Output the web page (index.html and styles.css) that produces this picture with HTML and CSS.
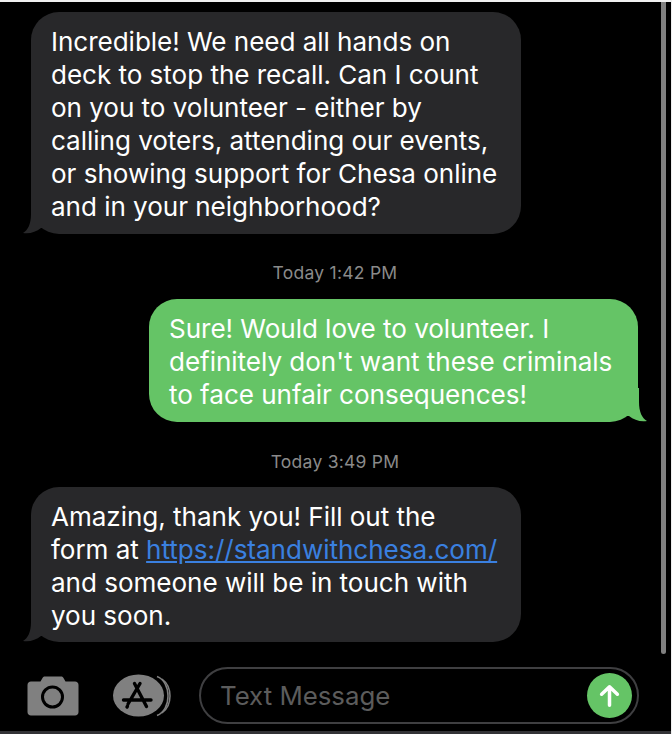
FILE: index.html
```html
<!DOCTYPE html>
<html lang="en">
<head>
<meta charset="utf-8">
<title>Messages</title>
<link rel="stylesheet" href="styles.css">
</head>
<body>
<main class="screen">
  <div class="scrollbar"></div>
  <section class="thread">
    <div class="bubble received first">
      <p>Incredible! We need all hands on<br>deck to stop the recall. Can I count<br>on you to volunteer - either by<br>calling voters, attending our events,<br>or showing support for Chesa online<br>and in your neighborhood?</p>
      <svg class="tail tail-left" viewBox="0 0 24 34"><path d="M8 0V14C8 24 5 30 0 33C7 34 13 32 18 28L24 28V0Z"/></svg>
    </div>
    <div class="stamp">Today 1:42 PM</div>
    <div class="bubble sent">
      <p>Sure! Would love to volunteer. I<br>definitely don't want these criminals<br>to face unfair consequences!</p>
      <svg class="tail tail-right" viewBox="0 0 24 34"><path d="M16 0V14C16 24 19 30 24 33C17 34 11 32 6 28L0 28V0Z"/></svg>
    </div>
    <div class="stamp lower">Today 3:49 PM</div>
    <div class="bubble received last">
      <p>Amazing, thank you! Fill out the<br>form at <a href="#">https://standwithchesa.com/</a><br>and someone will be in touch with<br>you soon.</p>
      <svg class="tail tail-left" viewBox="0 0 24 34"><path d="M8 0V14C8 24 5 30 0 33C7 34 13 32 18 28L24 28V0Z"/></svg>
    </div>
  </section>
  <footer class="composer">
    <svg class="camera" viewBox="0 0 52 40"><path fill-rule="evenodd" d="M4 5.500H13.500L15.500 2C16.200 .8 17 .5 18 .5H34C35 .5 35.800 .8 36.500 2L38.500 5.500H48C50 5.500 51.500 7 51.500 9V36C51.500 38.200 50 39.500 48 39.500H4C2 39.500 .5 38.200 .5 36V9C.5 7 2 5.500 4 5.500ZM25.500 9.500A11.500 11.500 0 1 0 25.500 32.500A11.500 11.500 0 1 0 25.500 9.500ZM25.500 12.500A8.500 8.500 0 1 1 25.500 29.500A8.500 8.500 0 1 1 25.500 12.500Z"/></svg>
    <svg class="store" viewBox="0 0 58 44">
      <path class="store-ring" d="M44 2.500C51 5 55 13 55 22C55 31 51 39 44 41.500"/>
      <path class="store-ring" d="M49 5C54.500 9 57 15 57 22C57 29 54.500 35 49 39"/>
      <ellipse class="store-disc" cx="25.500" cy="21.500" rx="25.500" ry="21"/>
      <path class="store-a" d="M21.500 9.500L33.500 32.500M27 9.500L15 30M10.500 26H38M14 33L14.500 32.200"/>
    </svg>
    <div class="field">
      <span class="placeholder">Text Message</span>
      <span class="send">
        <svg viewBox="0 0 24 26"><path d="M12 24V3M3 11.500L12 3L21 11.500"/></svg>
      </span>
    </div>
  </footer>
</main>
</body>
</html>
```
FILE: styles.css
```css
* { box-sizing: border-box; }
html, body { margin: 0; height: 100%; }
body { background: #f0f0f0; overflow: hidden; }
.screen {
  position: relative;
  width: 671px;
  height: 732px;
  margin-top: 2px;
  background: #000;
  border-bottom: 3px solid #333336;
  font-family: Inter, "Liberation Sans", sans-serif;
  overflow: hidden;
}
.scrollbar {
  position: absolute;
  top: -2px;
  left: 661px;
  width: 5px;
  height: 654px;
  border-radius: 0 0 3px 3px;
  background: #808080;
}
.thread {
  display: flex;
  flex-direction: column;
  padding: 10px 33px 0 31px;
}
.bubble {
  position: relative;
  width: 490px;
  border-radius: 28px;
  padding: 13px 0 11px 20px;
  color: #fff;
  font-size: 26.100px;
  line-height: 33px;
  letter-spacing: -0.05px;
}
.bubble p { margin: 0; white-space: nowrap; }
.bubble a { color: #3a80e0; }
.received { background: #28282a; fill: #28282a; }
.sent {
  align-self: flex-end;
  width: 489px;
  margin-top: 14px;
  background: #65c466;
  fill: #65c466;
}
.last { margin-top: 13px; padding-bottom: 10px; }
.tail { position: absolute; bottom: 0; width: 24px; height: 34px; fill: inherit; }
.tail-left { left: -8px; }
.tail-right { right: -9px; }
.stamp {
  margin-top: 27px;
  padding-left: 1px;
  text-align: center;
  color: #8a8a8a;
  font-size: 17.500px;
  line-height: 24px;
  letter-spacing: 0.25px;
}
.lower { margin-top: 28px; }
.composer {
  display: flex;
  align-items: center;
  margin-top: 25px;
  padding-left: 27px;
}
.camera { width: 52px; height: 40px; fill: #808080; }
.store { width: 58px; height: 44px; margin-left: 34px; }
.store-disc { fill: #808080; }
.store-ring { fill: none; stroke: #808080; stroke-width: 1.500; }
.store-a { fill: none; stroke: #000; stroke-width: 3.400; stroke-linecap: round; }
.field {
  display: flex;
  align-items: center;
  justify-content: space-between;
  width: 440px;
  height: 57px;
  margin-left: 28px;
  padding: 0 5px 0 19px;
  border: 2px solid #3f3f41;
  border-radius: 29px;
}
.placeholder { color: #5c5c5c; font-size: 25.800px; }
.send {
  display: flex;
  align-items: center;
  justify-content: center;
  width: 45px;
  height: 45px;
  border-radius: 50%;
  background: #65c466;
}
.send svg {
  width: 21px;
  height: 23px;
  fill: none;
  stroke: #fff;
  stroke-width: 4;
  stroke-linecap: round;
  stroke-linejoin: round;
}
```
